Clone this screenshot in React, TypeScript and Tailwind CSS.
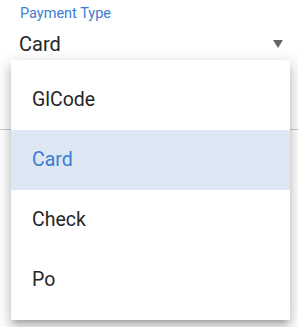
const options = ["GlCode", "Card", "Check", "Po"];

export default function App() {
  const selected = "Card";
  return (
    <div className="relative h-[327px] w-[298px] overflow-hidden bg-white font-['Roboto',sans-serif]">
      <div className="relative px-5 pt-[5px]">
        <p className="text-[14.5px] leading-[18px] text-[#3b7dd1]">Payment Type</p>
        <div className="flex items-center justify-between pt-[8px]">
          <span className="-ml-px text-[20px] leading-[26px] text-[#262626]">Card</span>
          <svg width="10" height="8" viewBox="0 0 10 8" className="mr-[-5px] mt-[-1px]">
            <path d="M0 0h10L5 8z" fill="#666" />
          </svg>
        </div>
      </div>
      <div className="mt-[72px] h-px w-full bg-[#c8c8c8]" />

      <ul className="absolute left-[11px] top-[60px] w-[279px] bg-white py-[10px] shadow-[0_5px_5px_-3px_rgba(0,0,0,0.2),0_8px_10px_1px_rgba(0,0,0,0.14),0_3px_14px_2px_rgba(0,0,0,0.12)]">
        {options.map((o) => (
          <li
            key={o}
            className={`flex h-[60px] items-center pl-[21px] text-[19.5px] ${
              o === selected ? "bg-[#dce7f3] text-[#3b7dd1]" : "text-[#262626]"
            }`}
          >
            {o}
          </li>
        ))}
      </ul>
    </div>
  );
}
